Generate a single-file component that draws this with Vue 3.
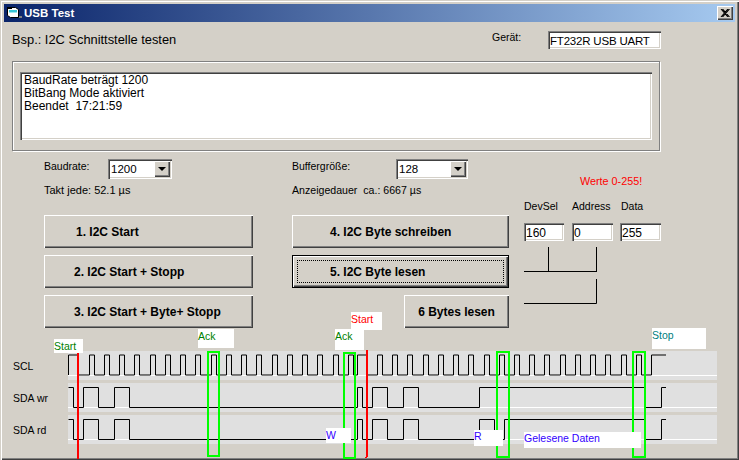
<script setup>
const period = 15.25
function scl() {
  const top = 355, low = 375
  let d = `M68.5 ${low}V${top}H78.5V${low}`
  let x = 88.5
  for (let i = 0; i < 18; i++) {
    const r = Math.round(x + i * period) + 0.5
    d += `H${r}V${top}H${r + 5}V${low}`
  }
  d += `H357.5V${top}H367.5V${low}`
  for (let i = 0; i < 18; i++) {
    const r = Math.round(377 + i * 15.22) + 0.5
    d += `H${r}V${top}H${r + 5}V${low}`
  }
  d += `H651.5V${top}H666`
  return d
}
function sda(top, low, read) {
  let d = `M68.5 ${top}H73.5V${low}H83.5V${top}H98.5V${low}H114.5V${top}H129.5V${low}`
  d += `H357.5V${top}H362.5V${low}H372.5V${top}H387.5V${low}H403.5V${top}H418.5V${low}H479.5V${top}`
  if (read) d += `H494.5V${low}H504.5V${top}`
  d += `H645.5V${low}H661.5V${top}H666`
  return d
}
const bands = [351, 383, 415]
const waves = [scl(), sda(387.5, 407.5, false), sda(419.5, 439.5, true)]
const windows = [
  { x: 208, y: 352, w: 11, h: 104 },
  { x: 344, y: 353, w: 11, h: 105 },
  { x: 497, y: 352, w: 12, h: 105 },
  { x: 633, y: 352, w: 12, h: 105 }
]
const names = ['SCL', 'SDA wr', 'SDA rd']
const buttonsLeft = ['1. I2C Start', '2. I2C Start + Stopp', '3. I2C Start + Byte+ Stopp']
</script>

<template>
  <div class="window">
    <header class="titlebar">
      <svg class="appicon" width="16" height="16" viewBox="0 0 16 16">
        <path d="M1.5 2.5h8l3 2v8h-8l-3-2z" fill="#fff" stroke="#000" />
        <path d="M3 5h8v2.5H3z" fill="#39c6d6" />
        <path d="M1 2h5v2H1z" fill="#000" />
        <path d="M13 11h3v2h-3z" fill="#808080" />
      </svg>
      <span class="title">USB Test</span>
      <button class="close" aria-label="Schließen">
        <svg width="10" height="8" viewBox="0 0 10 8"><path d="M1 0L8 8M2.5 0L9.5 8M8 0L1 8M9.5 0L2.5 8" stroke="#000" stroke-width="1.1" fill="none" /></svg>
      </button>
    </header>

    <main class="form">
      <div class="head">
        <span class="heading">Bsp.: I2C Schnittstelle testen</span>
        <span class="device-label">Gerät:</span>
        <input class="field device" value="FT232R USB UART" readonly />
      </div>

      <section class="frame">
        <div class="log">
          <div>BaudRate beträgt 1200</div>
          <div>BitBang Mode aktiviert</div>
          <div>Beendet&nbsp; 17:21:59</div>
        </div>
      </section>

      <section class="settings">
        <div class="setting col-left">
          <div class="setting-row">
            <span class="setting-label">Baudrate:</span>
            <div class="combo combo-baud"><span>1200</span><i class="arrow"></i></div>
          </div>
          <div class="hint">Takt jede: 52.1 µs</div>
        </div>
        <div class="setting col-mid">
          <div class="setting-row">
            <span class="setting-label wide">Buffergröße:</span>
            <div class="combo combo-buf"><span>128</span><i class="arrow"></i></div>
          </div>
          <div class="hint narrow">Anzeigedauer&nbsp; ca.: 6667 µs</div>
        </div>
        <div class="warn">Werte 0-255!</div>
      </section>

      <section class="controls">
        <div class="col-btn">
          <button v-for="(b, i) in buttonsLeft" :key="b" class="btn lead" :class="{ first: i === 0 }">{{ b }}</button>
        </div>
        <div class="col-btn mid">
          <button class="btn lead-mid">4. I2C Byte schreiben</button>
          <button class="btn focused"><span class="focus-ring">5. I2C Byte lesen</span></button>
          <button class="btn short">6 Bytes lesen</button>
        </div>
        <div class="col-params">
          <div class="param-labels">
            <span>DevSel</span><span>Address</span><span>Data</span>
          </div>
          <div class="param-fields">
            <input class="field" value="160" readonly />
            <input class="field" value="0" readonly />
            <input class="field" value="255" readonly />
          </div>
          <svg class="brackets" width="74" height="58" viewBox="0 0 74 58">
            <path d="M24.5 0V24.5M72.5 0V24.5M0 24.5H73M72.5 32V56.5H0" fill="none" stroke="#000" />
          </svg>
        </div>
      </section>

      <section class="scope">
        <svg class="scope-svg" width="739" height="132" viewBox="0 328 739 132">
          <g v-for="y in bands" :key="y">
            <rect x="68" :y="y" width="649" height="29" fill="#e0e0e0" />
            <rect x="68" :y="y + 24" width="649" height="1" fill="#fff" />
          </g>
          <path v-for="(d, i) in waves" :key="i" :d="d" fill="none" stroke="#000" />
          <rect x="77" y="353" width="2" height="106" fill="#f00" />
          <path d="M366 350h2v107h-1v1h-2v-1h1z" fill="#f00" />
          <rect v-for="w in windows" :key="w.x" :x="w.x" :y="w.y" :width="w.w" :height="w.h" fill="none" stroke="#0f0" stroke-width="2" />
        </svg>
        <span v-for="(n, i) in names" :key="n" class="sig" :class="'sig' + i">{{ n }}</span>
        <span class="tag green t-start">Start</span>
        <span class="tag green t-ack1">Ack</span>
        <span class="tag green t-ack2">Ack</span>
        <span class="tag red t-start2">Start</span>
        <span class="tag teal t-stop">Stop</span>
        <span class="tag blue t-w">W</span>
        <span class="tag blue t-r">R</span>
        <span class="tag blue t-data">Gelesene Daten</span>
      </section>
    </main>
  </div>
</template>

<style>
html, body { margin: 0; padding: 0; background: #d4d0c8; overflow: hidden; }
</style>

<style scoped>
.window {
  box-sizing: border-box;
  width: 739px;
  height: 460px;
  background: #d4d0c8;
  font: 10.5px "Liberation Sans", Arial, sans-serif;
  color: #000;
  padding: 4px 4px 0;
  box-shadow: inset 1px 1px 0 #d4d0c8, inset 2px 2px 0 #fff, inset -1px -1px 0 #404040, inset -2px -2px 0 #808080;
  overflow: hidden;
}
.titlebar {
  height: 18px;
  display: flex;
  align-items: center;
  background: linear-gradient(90deg, #0a246a, #a6caf0);
  color: #fff;
  padding: 0 2px;
}
.appicon { flex: none; }
.title { margin-left: 2px; font-weight: bold; font-size: 11.5px; flex: 1; }
.close {
  box-sizing: border-box;
  width: 16px;
  height: 14px;
  padding: 0;
  display: flex;
  align-items: center;
  justify-content: center;
  background: #d4d0c8;
  border: 0;
  box-shadow: inset 1px 1px 0 #fff, inset -1px -1px 0 #404040, inset -2px -2px 0 #808080;
}
.form { display: block; }
.head {
  display: flex;
  align-items: flex-start;
  height: 27px;
  margin-top: 9px;
  padding-left: 8px;
}
.heading { width: 480px; margin-top: 1px; font-size: 12.85px; line-height: 15px; }
.device-label { width: 56px; line-height: 13px; }
.field {
  box-sizing: border-box;
  display: block;
  height: 18px;
  padding: 1px 0 0 2px;
  background: #fff;
  color: #000;
  border: 0;
  outline: 0;
  font: 12px "Liberation Sans", Arial, sans-serif;
  box-shadow: inset 1px 1px 0 #808080, inset 2px 2px 0 #404040, inset -1px -1px 0 #fff, inset -2px -2px 0 #d4d0c8;
}
.device { width: 113px; font-size: 11.5px; letter-spacing: -0.2px; }
.frame {
  box-sizing: border-box;
  width: 648px;
  height: 90px;
  margin: 3px 0 0 8px;
  padding: 10px 8px 0;
  border: 1px solid #808080;
  box-shadow: inset 1px 1px 0 #fff, 1px 1px 0 #fff;
}
.log {
  box-sizing: border-box;
  height: 68px;
  padding: 2px 4px;
  margin-left: -1px;
  margin-right: -1px;
  background: #fff;
  line-height: 13px;
  font-size: 12px;
  box-shadow: inset 1px 1px 0 #808080, inset 2px 2px 0 #404040, inset -1px -1px 0 #fff, inset -2px -2px 0 #d4d0c8;
}
.settings {
  position: relative;
  display: flex;
  height: 56px;
  margin-top: 8px;
  padding-left: 40px;
}
.col-left { width: 248px; }
.setting-row { display: flex; align-items: center; height: 20px; }
.setting-label { width: 64px; margin-top: -6px; }
.setting-label.wide { width: 104px; }
.hint { margin-top: 4px; line-height: 14px; font-size: 11px; }
.hint.narrow { font-size: 10.6px; }
.combo {
  box-sizing: border-box;
  height: 20px;
  display: flex;
  align-items: center;
  justify-content: space-between;
  padding: 2px;
  background: #fff;
  font-size: 11.5px;
  box-shadow: inset 1px 1px 0 #808080, inset 2px 2px 0 #404040, inset -1px -1px 0 #fff, inset -2px -2px 0 #d4d0c8;
}
.combo span { padding-left: 1px; }
.combo-baud { width: 64px; }
.combo-buf { width: 72px; }
.arrow {
  position: relative;
  display: block;
  width: 16px;
  height: 16px;
  background: #d4d0c8;
  box-shadow: inset 1px 1px 0 #fff, inset -1px -1px 0 #404040, inset -2px -2px 0 #808080;
}
.arrow::after {
  content: "";
  position: absolute;
  left: 4px;
  top: 6px;
  border: 4px solid transparent;
  border-top-color: #000;
  border-bottom: 0;
}
.warn {
  position: absolute;
  left: 576px;
  top: 16px;
  color: #f00;
  font-size: 10.8px;
}
.controls {
  display: flex;
  height: 113px;
  padding-left: 40px;
}
.col-btn {
  display: flex;
  flex-direction: column;
  gap: 7px;
  width: 209px;
}
.col-btn.mid { width: 217px; margin-left: 39px; align-items: flex-end; }
.btn {
  box-sizing: border-box;
  flex: none;
  width: 100%;
  height: 33px;
  padding: 0;
  background: #d4d0c8;
  border: 0;
  color: #000;
  font: bold 12px "Liberation Sans", Arial, sans-serif;
  box-shadow: inset 1px 1px 0 #fff, inset -1px -1px 0 #404040, inset -2px -2px 0 #808080;
}
.btn.lead { text-align: left; padding-left: 30px; }
.btn.lead.first { padding-left: 32px; }
.btn.lead-mid { text-align: left; padding-left: 38px; }
.btn.short { width: 105px; }
.btn.focused {
  padding: 4px;
  border: 1px solid #000;
}
.focus-ring {
  display: flex;
  align-items: center;
  height: 100%;
  padding-left: 32px;
  box-sizing: border-box;
  border: 1px dotted #000;
}
.col-params { margin-left: 15px; margin-top: -16px; width: 137px; }
.param-labels { display: grid; grid-template-columns: 48px 49px 40px; height: 16px; line-height: 14px; }
.param-fields { display: grid; grid-template-columns: 40px 41px 41px; column-gap: 8px; margin-top: 8px; }
.param-fields .field { width: 100%; }
.param-fields .field:last-child { margin-left: -1px; }
.brackets { display: block; margin-top: 6px; }
.scope { position: relative; height: 132px; margin-left: -4px; }
.scope-svg { display: block; }
.sig { position: absolute; left: 13px; line-height: 14px; }
.sig0 { top: 31px; }
.sig1 { top: 63px; }
.sig2 { top: 95px; }
.tag { position: absolute; background: #fff; line-height: 15px; white-space: nowrap; }
.green { color: #008000; }
.red { color: #f00; }
.teal { color: #008080; }
.blue { color: #3300ff; }
.t-start { left: 54px; top: 11px; width: 29px; height: 14px; }
.t-ack1 { left: 198px; top: 1px; width: 36px; height: 19px; }
.t-ack2 { left: 335px; top: 1px; width: 29px; height: 21px; }
.t-start2 { left: 351px; top: -16px; width: 31px; height: 18px; }
.t-stop { left: 652px; top: 0; width: 54px; height: 21px; }
.t-w { left: 326px; top: 100px; width: 25px; height: 15px; }
.t-r { left: 474px; top: 102px; width: 29px; height: 16px; line-height: 13px; }
.t-data { left: 524px; top: 104px; width: 117px; height: 16px; line-height: 13px; }
</style>
